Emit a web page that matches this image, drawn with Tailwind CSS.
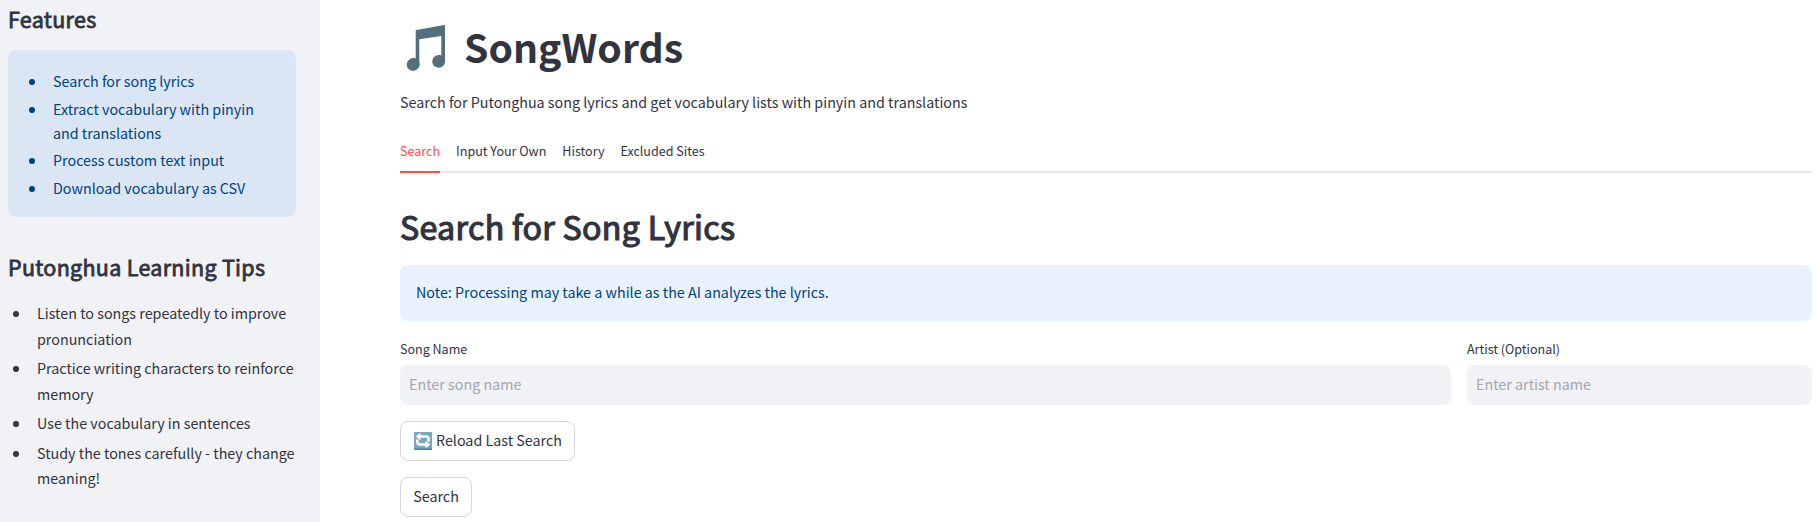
<!DOCTYPE html>
<html lang="en">
<head>
<meta charset="utf-8">
<title>SongWords</title>
<script src="https://cdn.jsdelivr.net/npm/@tailwindcss/browser@4"></script>
</head>
<body class="flex h-[522px] overflow-hidden bg-white font-['Noto_Sans_CJK_SC','Noto_Sans',sans-serif] text-[14.32px] text-[#31333f]">
  <aside class="w-[320px] shrink-0 bg-[#f0f2f6] pl-2 pr-6">
    <h3 class="pt-[3px] text-[21.5px] leading-8 font-normal tracking-[0.3px] whitespace-nowrap [-webkit-text-stroke:0.8px_currentColor]">Features</h3>
    <div class="mt-[15px] h-[167px] w-[288px] rounded-lg bg-[#dae6f4] pt-[19px] pl-[21px] text-[#004280]">
      <ul class="space-y-1 leading-[23.75px] whitespace-nowrap">
        <li class="flex"><span class="mt-[10px] mr-[18px] size-[6px] rounded-full bg-current"></span><span>Search for song lyrics</span></li>
        <li class="flex"><span class="mt-[10px] mr-[18px] size-[6px] rounded-full bg-current"></span><span>Extract vocabulary with pinyin<br>and translations</span></li>
        <li class="flex"><span class="mt-[10px] mr-[18px] size-[6px] rounded-full bg-current"></span><span>Process custom text input</span></li>
        <li class="flex"><span class="mt-[10px] mr-[18px] size-[6px] rounded-full bg-current"></span><span>Download vocabulary as CSV</span></li>
      </ul>
    </div>
    <h3 class="mt-[34px] text-[21.5px] leading-8 font-normal tracking-[0.3px] whitespace-nowrap [-webkit-text-stroke:0.8px_currentColor]">Putonghua Learning Tips</h3>
    <ul class="mt-[17px] space-y-1 pl-[5px] leading-[25.6px] whitespace-nowrap">
      <li class="flex"><span class="mt-[11px] mr-[18px] size-[6px] rounded-full bg-current"></span><span>Listen to songs repeatedly to improve<br>pronunciation</span></li>
      <li class="flex"><span class="mt-[11px] mr-[18px] size-[6px] rounded-full bg-current"></span><span>Practice writing characters to reinforce<br>memory</span></li>
      <li class="flex"><span class="mt-[11px] mr-[18px] size-[6px] rounded-full bg-current"></span><span>Use the vocabulary in sentences</span></li>
      <li class="flex leading-[25px]"><span class="mt-[11px] mr-[18px] size-[6px] rounded-full bg-current"></span><span>Study the tones carefully - they change<br>meaning!</span></li>
    </ul>
  </aside>
  <main class="flex flex-1 flex-col pr-2 pl-20">
    <h1 class="flex h-[72px] items-center pt-6 pl-[6px] text-[39.2px] leading-[48px] font-bold whitespace-nowrap">
      <svg class="mr-[18px] h-[48px] w-[40px] shrink-0" viewBox="0 0 40 48" fill="#546e7a"><path d="M9.700 6.700Q9.700 6 10.500 5.900L38.200 1.100Q39 1 39 1.800V37H35.300V11.900L13.300 15.200V41H9.700Z"/><ellipse cx="7.200" cy="40.400" rx="6.500" ry="6.300" transform="rotate(-35 7.200 40.400)"/><ellipse cx="32.700" cy="37.300" rx="6.500" ry="6.300" transform="rotate(-35 32.700 37.300)"/></svg>
      <span class="-mt-[5px]">SongWords</span>
    </h1>
    <p class="mt-[18px] leading-6 whitespace-nowrap"><span>Search for Putonghua song lyrics and get vocabulary lists with pinyin and translations</span></p>
    <nav class="mt-[19px] flex h-10 gap-4 border-b-2 border-[#e8e8ea] text-[12.56px] leading-9 whitespace-nowrap">
      <a class="-mb-[2px] border-b-2 border-[#ff4b4b] text-[#ff4b4b]"><span>Search</span></a>
      <a><span>Input Your Own</span></a>
      <a><span>History</span></a>
      <a><span>Excluded Sites</span></a>
    </nav>
    <h2 class="mt-[29px] text-[32.2px] leading-[48px] font-normal tracking-[0.3px] whitespace-nowrap [-webkit-text-stroke:1.2px_currentColor]"><span>Search for Song Lyrics</span></h2>
    <div class="mt-[15px] flex h-14 shrink-0 items-center rounded-lg bg-[#e8f2fc] px-4 pb-[2px] text-[#004280]"><span>Note: Processing may take a while as the AI analyzes the lyrics.</span></div>
    <div class="mt-4 flex gap-4">
      <label class="flex w-[1051px] flex-col text-[12.53px] leading-6"><span>Song Name</span>
        <span class="mt-1 flex h-10 items-center rounded-lg bg-[#f0f2f6] px-[9px] pb-[2px] text-[14.32px] text-[#a5a6ab]">Enter song name</span></label>
      <label class="flex flex-1 flex-col text-[12.53px] leading-6"><span>Artist (Optional)</span>
        <span class="mt-1 flex h-10 items-center rounded-lg bg-[#f0f2f6] px-[9px] pb-[2px] text-[14.32px] text-[#a5a6ab]">Enter artist name</span></label>
    </div>
    <button class="mt-4 flex h-10 w-[175px] shrink-0 items-center rounded-lg border border-[#d6d6d9] pb-[2px] pl-[13px] whitespace-nowrap">
      <svg class="mt-[2px] mr-[4px] size-[18px]" viewBox="0 0 18 18"><rect width="18" height="18" rx="1" fill="#78a9bc"/><path d="M0 16.500H18V17Q18 18 17 18H1Q0 18 0 17Z" fill="#4d8299"/><path d="M5.500 4.500H12Q14.600 4.500 14.600 7V9.500M12.500 12.500H6Q3.400 12.500 3.400 10V7.500" fill="none" stroke="#fff" stroke-width="2.600"/><path d="M1.500 4.500L6.500 0.800V8.200ZM16.500 12.500L11.500 8.800V16.200Z" fill="#fff"/></svg>
      <span>Reload Last Search</span>
    </button>
    <button class="mt-4 flex h-10 w-[72px] shrink-0 items-center justify-center rounded-lg border border-[#d6d6d9] pb-[2px]"><span>Search</span></button>
  </main>
</body>
</html>
